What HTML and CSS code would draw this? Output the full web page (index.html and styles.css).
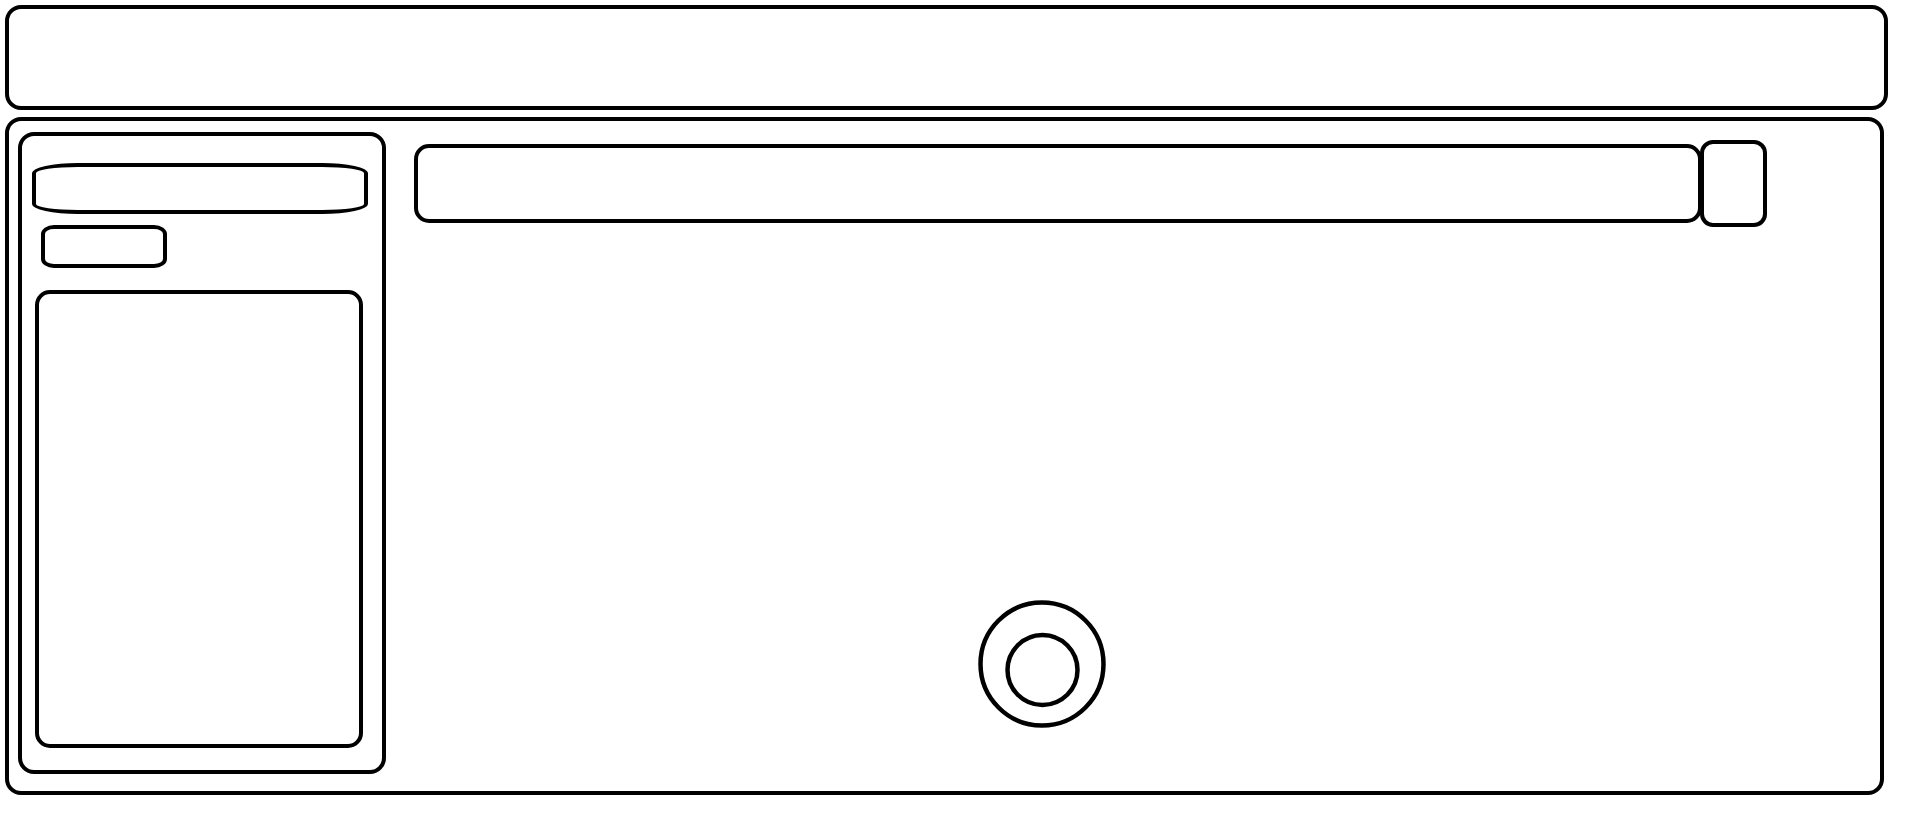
FILE: index.html
```html
<!DOCTYPE html>
<html lang="en">
<head>
  <meta charset="UTF-8" />
  <meta name="viewport" content="width=device-width, initial-scale=1.0"/>
  <title>Wireframe</title>
  <link rel="stylesheet" href="styles.css">
</head>
<body>
  <div class="page">
    <header class="topbar"></header>

    <div class="main">
      <aside class="sidebar">
        <div class="side-input"></div>
        <div class="side-button"></div>
        <div class="side-list"></div>
      </aside>

      <section class="content">
        <div class="search-row">
          <div class="search-bar"></div>
          <div class="search-button"></div>
        </div>
        <svg class="record" width="128" height="128" viewBox="0 0 128 128">
          <circle cx="64" cy="64" r="61.5" fill="none" stroke="#000" stroke-width="4.5"/>
          <circle cx="64.5" cy="70" r="35" fill="none" stroke="#000" stroke-width="4.5"/>
        </svg>
      </section>
    </div>
  </div>
</body>
</html>
```

FILE: styles.css
```css
body {
  margin: 0;
  background: white;
  font-family: 'Liberation Sans', sans-serif;
}
.page {
  padding: 5px 0 0 5px;
}
.topbar {
  box-sizing: border-box;
  width: 1883px;
  height: 105px;
  border: 4px solid #000;
  border-radius: 16px;
}
.main {
  box-sizing: border-box;
  display: flex;
  align-items: flex-start;
  width: 1879px;
  height: 678px;
  margin-top: 7px;
  padding-left: 9px;
  border: 4px solid #000;
  border-radius: 16px;
}
.sidebar {
  box-sizing: border-box;
  display: flex;
  flex-direction: column;
  width: 368px;
  height: 642px;
  margin-top: 11px;
  padding: 27px 0 0 10px;
  border: 4px solid #000;
  border-radius: 16px;
}
.side-input {
  box-sizing: border-box;
  width: 336px;
  height: 51px;
  border: 4px solid #000;
  border-radius: 46px / 10px;
}
.side-button {
  box-sizing: border-box;
  width: 126px;
  height: 43px;
  margin: 11px 0 0 9px;
  border: 4px solid #000;
  border-radius: 13px / 9px;
}
.side-list {
  box-sizing: border-box;
  width: 328px;
  height: 458px;
  margin: 22px 0 0 3px;
  border: 4px solid #000;
  border-radius: 15px;
}
.content {
  display: flex;
  flex-direction: column;
  padding: 19px 0 0 28px;
}
.search-row {
  display: flex;
  align-items: center;
}
.search-bar {
  box-sizing: border-box;
  width: 1288px;
  height: 79px;
  border: 4px solid #000;
  border-radius: 15px;
}
.search-button {
  box-sizing: border-box;
  width: 67px;
  height: 87px;
  margin-left: -2px;
  border: 4px solid #000;
  border-radius: 13px;
}
.record {
  display: block;
  margin: 373px 0 0 564px;
}
```
